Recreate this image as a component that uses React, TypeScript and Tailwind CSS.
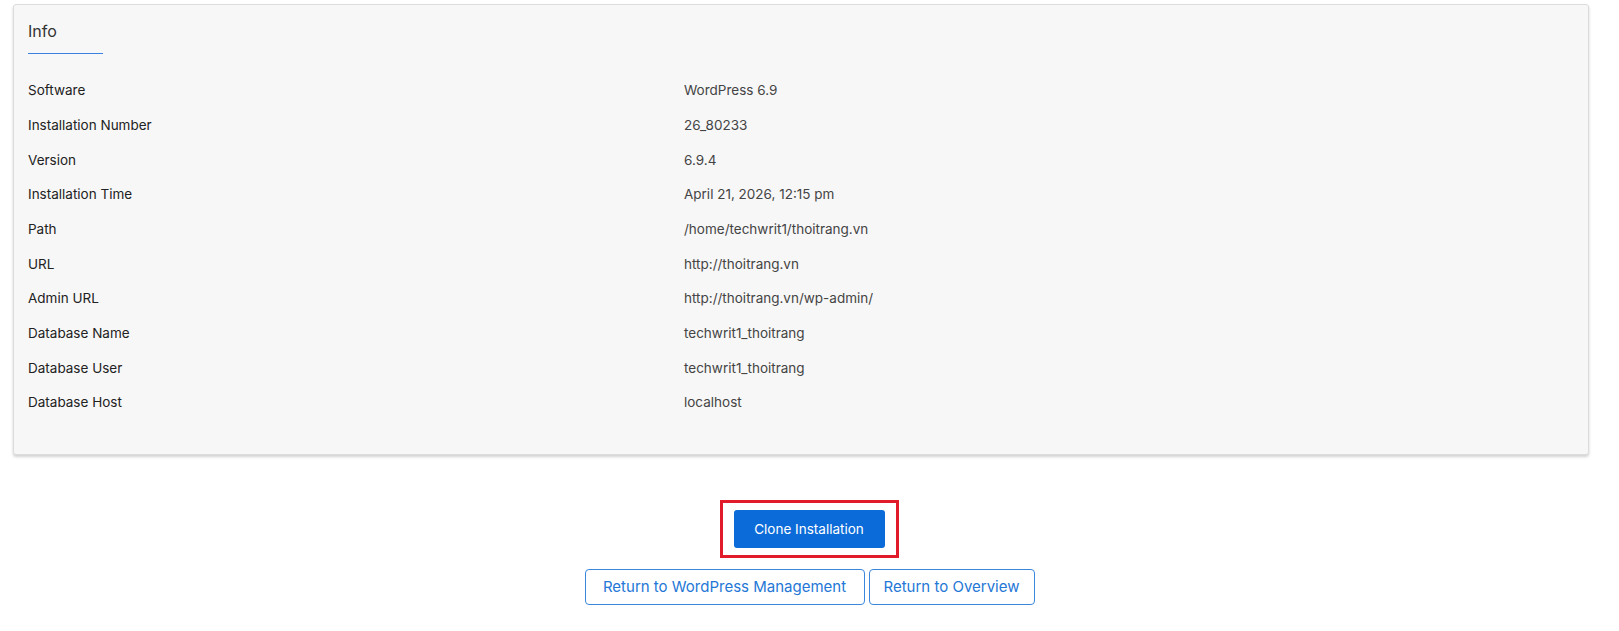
export default function App() {
  const rows: [string, string][] = [
    ["Software", "WordPress 6.9"],
    ["Installation Number", "26_80233"],
    ["Version", "6.9.4"],
    ["Installation Time", "April 21, 2026, 12:15 pm"],
    ["Path", "/home/techwrit1/thoitrang.vn"],
    ["URL", "http://thoitrang.vn"],
    ["Admin URL", "http://thoitrang.vn/wp-admin/"],
    ["Database Name", "techwrit1_thoitrang"],
    ["Database User", "techwrit1_thoitrang"],
    ["Database Host", "localhost"],
  ];
  return (
    <div className="w-[1619px] h-[631px] bg-white" style={{ fontFamily: "Inter, 'Open Sans', sans-serif" }}>
      <div className="pt-[4px] pl-[13px] w-[1589px]">
        <div className="bg-[#f7f7f7] border border-[#dcdcdc] rounded-[3px] shadow-[0_2px_3px_rgba(0,0,0,0.18)] pl-[14px] pr-[14px] pt-[16px] pb-[34px]">
          <div className="text-[16px] text-[#333] leading-[20px]">Info</div>
          <div className="w-[75px] h-[1px] bg-[#3b82e0] mt-[12px] mb-[19px]" />
          <div className="flex flex-col">
            {rows.map(([k, v]) => (
              <div key={k} className="flex h-[34.7px] items-center text-[13.5px] text-[#222]">
                <div className="w-[656px]">{k}</div>
                <div className="text-[#444]">{v}</div>
              </div>
            ))}
          </div>
        </div>
      </div>
      <div className="flex flex-col items-center mt-[45px]">
        <div className="border-[3px] border-[#e21b2a] px-[11px] py-[7px] ml-[-1px]">
          <button className="bg-[#0b6bd9] text-white text-[13.5px] rounded-[3px] w-[151px] h-[38px]">Clone Installation</button>
        </div>
        <div className="flex gap-[4px] mt-[11px]">
          <button className="border border-[#3b87dc] rounded-[4px] text-[#2477d6] text-[15px] w-[280px] h-[36px]">Return to WordPress Management</button>
          <button className="border border-[#3b87dc] rounded-[4px] text-[#2477d6] text-[15px] w-[166px] h-[36px]">Return to Overview</button>
        </div>
      </div>
    </div>
  );
}
